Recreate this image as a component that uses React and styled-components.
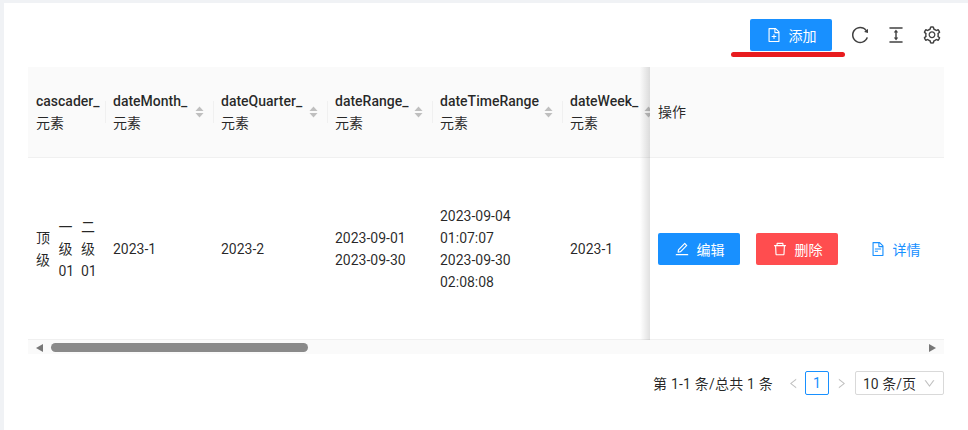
import React from 'react';
import styled, { createGlobalStyle } from 'styled-components';
import {
  AiOutlineFileAdd,
  AiOutlineReload,
  AiOutlineColumnHeight,
  AiOutlineSetting,
  AiOutlineEdit,
  AiOutlineDelete,
  AiOutlineFileText,
  AiOutlineLeft,
  AiOutlineRight,
  AiOutlineDown,
} from 'react-icons/ai';

const GlobalStyle = createGlobalStyle`
  html, body {
    margin: 0;
    padding: 0;
    background: #f0f2f5;
    font-family: Roboto, "Noto Sans CJK SC", sans-serif;
    font-size: 14px;
    color: rgba(0, 0, 0, 0.85);
  }
  * { box-sizing: border-box; }
`;

const Page = styled.div`
  width: 968px;
  height: 430px;
  padding: 3px 0 0 4px;
  overflow: hidden;
`;

const Card = styled.div`
  height: 427px;
  background: #fff;
  padding: 16px 24px 0 24px;
`;

const Toolbar = styled.div`
  position: relative;
  display: flex;
  justify-content: flex-end;
  align-items: center;
  height: 32px;
  margin-bottom: 16px;
  padding-right: 2px;
`;

const RedMark = styled.div`
  position: absolute;
  left: 703px;
  top: 33px;
  width: 114px;
  height: 5px;
  border-radius: 3px;
  background: #e81c1f;
`;

const Button = styled.button`
  width: 82px;
  height: 32px;
  border: none;
  border-radius: 2px;
  padding: 0;
  display: flex;
  align-items: center;
  justify-content: center;
  gap: 7px;
  font: inherit;
  color: ${props => (props.$link ? '#1890ff' : '#fff')};
  background: ${props => props.$bg || 'transparent'};
  svg { font-size: 16px; }
`;

const ToolIcon = styled.span`
  display: flex;
  font-size: 20px;
  color: rgba(0, 0, 0, 0.75);
  margin-left: ${props => props.$gap}px;
`;

const TableWrap = styled.div`
  display: flex;
  width: 916px;
  height: 273px;
`;

const ScrollPart = styled.div`
  width: 622px;
  overflow: hidden;
  flex-shrink: 0;
`;

const DataTable = styled.table`
  table-layout: fixed;
  width: 700px;
  border-collapse: separate;
  border-spacing: 0;
`;

const HeadCell = styled.th`
  position: relative;
  height: 91px;
  width: ${props => props.$w}px;
  padding: 0 8px;
  text-align: left;
  font-weight: 400;
  line-height: 22px;
  background: #fafafa;
  border-bottom: 1px solid #f0f0f0;

  &:not(:first-child)::before {
    content: '';
    position: absolute;
    left: 0;
    top: 34px;
    width: 1px;
    height: 22px;
    background: #f0f0f0;
  }
`;

const HeadName = styled.div`
  font-weight: 500;
  white-space: nowrap;
`;

const SortIcon = styled.svg`
  position: absolute;
  right: ${props => props.$right}px;
  top: 39px;
  width: 9px;
  height: 12px;
`;

const BodyCell = styled.td`
  height: 182px;
  padding: 0 8px;
  line-height: 22px;
  border-bottom: 1px solid #f0f0f0;
  white-space: ${props => (props.$wrap ? 'normal' : 'nowrap')};
`;

const CascaderValues = styled.div`
  display: flex;
  align-items: center;
  gap: 7.5px;
`;

const CascaderValue = styled.span`
  width: 15px;
`;

const FixedPart = styled.div`
  width: 294px;
  position: relative;

  &::before {
    content: '';
    position: absolute;
    left: -10px;
    top: 0;
    bottom: 0;
    width: 10px;
    background: linear-gradient(to left, rgba(0, 0, 0, 0.12), rgba(0, 0, 0, 0));
  }
`;

const FixedHead = styled.div`
  height: 91px;
  display: flex;
  align-items: center;
  padding: 0 8px 2px;
  background: #fafafa;
  border-bottom: 1px solid #f0f0f0;
`;

const FixedBody = styled.div`
  height: 182px;
  display: flex;
  align-items: center;
  gap: 16px;
  padding: 0 8px;
  border-bottom: 1px solid #f0f0f0;
`;

const ScrollBar = styled.div`
  width: 916px;
  height: 14px;
  display: flex;
  align-items: center;
  padding: 1px 8px 0;
  background: #fafafa;
`;

const ScrollThumb = styled.div`
  width: 257px;
  height: 9px;
  margin-left: 8px;
  border-radius: 5px;
  background: #8a8a8a;
`;

const ScrollArrow = styled.div`
  width: 0;
  height: 0;
  border-top: 4.5px solid transparent;
  border-bottom: 4.5px solid transparent;
  ${props => (props.$right
    ? 'border-left: 7px solid #777; margin-left: auto;'
    : 'border-right: 7px solid #777;')}
`;

const Pagination = styled.div`
  display: flex;
  justify-content: flex-end;
  align-items: center;
  width: 916px;
  height: 24px;
  margin-top: 17px;
`;

const Total = styled.span`
  margin-right: 8px;
  letter-spacing: 0.2px;
  white-space: nowrap;
`;

const PageArrow = styled.span`
  width: 24px;
  display: flex;
  justify-content: center;
  font-size: 13px;
  color: rgba(0, 0, 0, 0.25);
`;

const PageNum = styled.span`
  width: 24px;
  height: 24px;
  display: flex;
  align-items: center;
  justify-content: center;
  border: 1px solid #1890ff;
  border-radius: 2px;
  color: #1890ff;
`;

const PageSize = styled.div`
  width: 89px;
  height: 24px;
  margin-left: 2px;
  padding: 0 7px;
  display: flex;
  align-items: center;
  justify-content: space-between;
  border: 1px solid #d9d9d9;
  border-radius: 2px;
  white-space: nowrap;
  svg { font-size: 13px; color: rgba(0, 0, 0, 0.25); }
`;

const Sort = ({ right = 9 }) => (
  <SortIcon $right={right} viewBox="0 0 9 12">
    <path d="M4.5 0.5 L8.5 5 L0.5 5 Z" fill="#bfbfbf" />
    <path d="M0.5 7 L8.5 7 L4.5 11.5 Z" fill="#bfbfbf" />
  </SortIcon>
);

const columns = [
  { name: 'cascader_', w: 77 },
  { name: 'dateMonth_', w: 108, sort: true },
  { name: 'dateQuarter_', w: 114, sort: true },
  { name: 'dateRange_', w: 105, sort: true },
  { name: 'dateTimeRange', w: 130, sort: true },
  { name: 'dateWeek_', w: 166, sort: true, right: 75 },
];

export default function App() {
  return (
    <Page>
      <GlobalStyle />
      <Card>
        <Toolbar>
          <Button $bg="#1890ff"><AiOutlineFileAdd />添加</Button>
          <ToolIcon $gap={18}><AiOutlineReload /></ToolIcon>
          <ToolIcon $gap={16}><AiOutlineColumnHeight /></ToolIcon>
          <ToolIcon $gap={16}><AiOutlineSetting /></ToolIcon>
          <RedMark />
        </Toolbar>

        <TableWrap>
          <ScrollPart>
            <DataTable>
              <thead>
                <tr>
                  {columns.map(col => (
                    <HeadCell key={col.name} $w={col.w}>
                      <HeadName>{col.name}</HeadName>
                      <div>元素</div>
                      {col.sort && <Sort right={col.right || 9} />}
                    </HeadCell>
                  ))}
                </tr>
              </thead>
              <tbody>
                <tr>
                  <BodyCell $wrap>
                    <CascaderValues>
                      <CascaderValue>顶级</CascaderValue>
                      <CascaderValue>一级01</CascaderValue>
                      <CascaderValue>二级01</CascaderValue>
                    </CascaderValues>
                  </BodyCell>
                  <BodyCell>2023-1</BodyCell>
                  <BodyCell>2023-2</BodyCell>
                  <BodyCell>2023-09-01<br />2023-09-30</BodyCell>
                  <BodyCell>2023-09-04<br />01:07:07<br />2023-09-30<br />02:08:08</BodyCell>
                  <BodyCell>2023-1</BodyCell>
                </tr>
              </tbody>
            </DataTable>
          </ScrollPart>
          <FixedPart>
            <FixedHead>操作</FixedHead>
            <FixedBody>
              <Button $bg="#1890ff"><AiOutlineEdit />编辑</Button>
              <Button $bg="#ff4d4f"><AiOutlineDelete />删除</Button>
              <Button $link><AiOutlineFileText />详情</Button>
            </FixedBody>
          </FixedPart>
        </TableWrap>

        <ScrollBar>
          <ScrollArrow />
          <ScrollThumb />
          <ScrollArrow $right />
        </ScrollBar>

        <Pagination>
          <Total>第 1-1 条/总共 1 条</Total>
          <PageArrow><AiOutlineLeft /></PageArrow>
          <PageNum>1</PageNum>
          <PageArrow><AiOutlineRight /></PageArrow>
          <PageSize>10 条/页<AiOutlineDown /></PageSize>
        </Pagination>
      </Card>
    </Page>
  );
}
